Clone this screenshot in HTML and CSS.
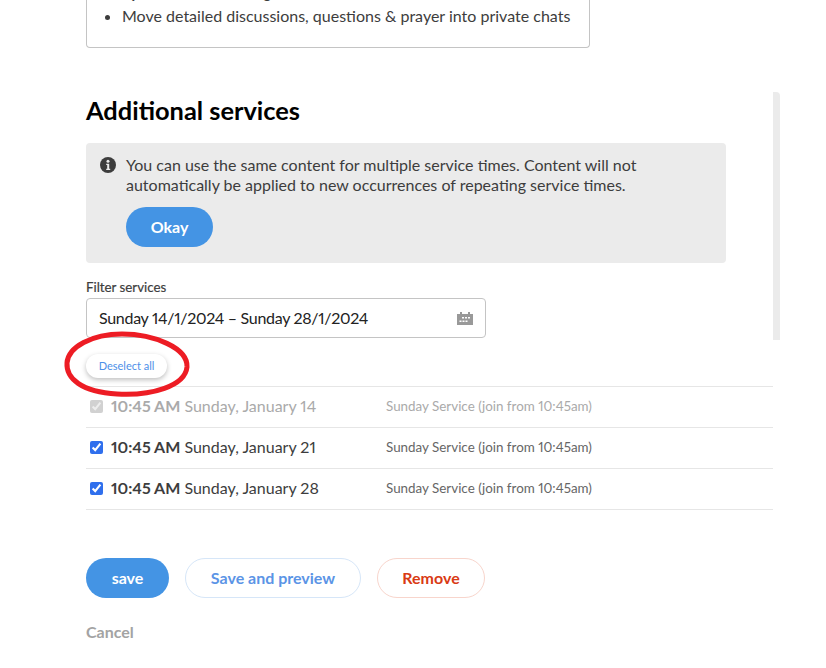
FILE: index.html
```html
<!doctype html>
<html lang="en">
<head>
    <meta charset="UTF-8">
    <title>Additional services</title>
    <link rel="stylesheet" href="styles.css">
</head>
<body>
<div class="page">
    <div class="tips">
        <ul>
            <li>Quieten down during service</li>
            <li>Move detailed discussions, questions &amp; prayer into private chats</li>
        </ul>
    </div>

    <h2 class="title">Additional services</h2>

    <div class="notice">
        <svg class="notice-icon" width="16" height="16" viewBox="0 0 16 16">
            <circle cx="8" cy="8" r="8" fill="#3d3d3d"/>
            <circle cx="8" cy="4.2" r="1.5" fill="#ebebeb"/>
            <path d="M6.200 6.700h3v5h1v1.400H6.200v-1.400h1v-3.600h-1z" fill="#ebebeb"/>
        </svg>
        <div class="notice-body">
            <p>You can use the same content for multiple service times. Content will not automatically be applied to new occurrences of repeating service times.</p>
            <button class="btn btn-primary btn-okay">Okay</button>
        </div>
    </div>

    <label class="filter-label">Filter services</label>
    <div class="filter-input">
        <span>Sunday 14/1/2024 – Sunday 28/1/2024</span>
        <svg width="16" height="13" viewBox="0 0 16 13">
            <path d="M0 2h3V0h2v2h6V0h2v2h3v11H0z" fill="#999"/>
            <path d="M5 5h2v1.500H5zM8 5h2v1.500H8zM11 5h2v1.500h-2zM2.500 8.500h2V10h-2zM5.500 8.500h2V10h-2zM8.500 8.500h2V10h-2z" fill="#fff"/>
        </svg>
    </div>

    <button class="deselect">Deselect all</button>

    <ul class="services">
        <li class="service service-off">
            <input type="checkbox" checked disabled>
            <span class="when"><b>10:45 AM</b> Sunday, January 14</span>
            <span class="name">Sunday Service (join from 10:45am)</span>
        </li>
        <li class="service">
            <input type="checkbox" checked>
            <span class="when"><b>10:45 AM</b> Sunday, January 21</span>
            <span class="name">Sunday Service (join from 10:45am)</span>
        </li>
        <li class="service">
            <input type="checkbox" checked>
            <span class="when"><b>10:45 AM</b> Sunday, January 28</span>
            <span class="name">Sunday Service (join from 10:45am)</span>
        </li>
    </ul>

    <div class="actions">
        <button class="btn btn-primary btn-save">save</button>
        <button class="btn btn-outline btn-preview">Save and preview</button>
        <button class="btn btn-outline btn-remove">Remove</button>
    </div>
    <a class="cancel">Cancel</a>
</div>

<div class="scroll-thumb"></div>

<svg class="circle-mark" width="130" height="70" viewBox="0 0 130 70">
    <path d="M60 4C30 4 6 17 5 33c-1 15 14 29 50 31 35 2 68-8 70-27C126 18 92 4 60 4z" fill="none" stroke="#ed1c24" stroke-width="5"/>
</svg>
</body>
</html>
```

FILE: styles.css
```css
* {
    padding: 0;
    margin: 0;
    box-sizing: border-box;
}

html, body {
    width: 100%;
    height: 100%;
    overflow: hidden;
    background-color: #fff;
}

body {
    font-family: Lato, "Open Sans", sans-serif;
    font-variant-numeric: proportional-nums;
    color: #3d3d3d;
    position: relative;
}

ul {
    list-style: none;
}

button {
    font-family: inherit;
    font-variant-numeric: inherit;
    cursor: pointer;
}

.page {
    width: 687px;
    margin: -30px 0 0 86px;
}

.tips {
    width: 504px;
    height: 78px;
    border: 1px solid #c4c4c4;
    border-top: 0;
    border-radius: 0 0 4px 4px;
    padding: 10px 0 0 35px;
}

.tips ul {
    list-style: disc;
}

.tips li {
    font-size: 16px;
    line-height: 24px;
}

.title {
    margin-top: 47px;
    font-size: 25.4px;
    line-height: 30px;
    font-weight: 700;
    color: #000;
}

.notice {
    display: flex;
    width: 640px;
    height: 120px;
    margin-top: 18px;
    padding: 12px 14px;
    background-color: #ebebeb;
    border-radius: 4px;
}

.notice-icon {
    flex: none;
    margin: 2px 10px 0 0;
}

.notice-body p {
    font-size: 16px;
    line-height: 20px;
}

.btn {
    height: 40px;
    padding-bottom: 2px;
    border-radius: 20px;
    font-size: 16px;
    font-weight: 700;
}

.btn-primary {
    background-color: #4494e4;
    border: 0;
    color: #fff;
}

.btn-okay {
    width: 87px;
    margin-top: 12px;
}

.filter-label {
    display: block;
    margin-top: 16px;
    font-size: 13.3px;
    line-height: 16px;
    -webkit-text-stroke: 0.2px #3d3d3d;
}

.filter-input {
    display: flex;
    align-items: center;
    justify-content: space-between;
    width: 400px;
    height: 40px;
    margin-top: 3px;
    padding: 0 12px;
    border: 1px solid #c4c4c4;
    border-radius: 4px;
    font-size: 16px;
    color: #222;
}

.filter-input span {
    margin-top: -2px;
    letter-spacing: -0.3px;
}

.deselect {
    display: block;
    width: 81px;
    height: 24px;
    margin-top: 16px;
    padding-bottom: 2px;
    background-color: #fff;
    border: 0;
    border-radius: 12px;
    box-shadow: 0 2px 5px rgba(0, 0, 0, 0.25);
    font-size: 11px;
    color: #4d8fe8;
}

.services {
    margin-top: 8px;
    border-top: 1px solid #e6e6e6;
}

.service {
    display: flex;
    align-items: center;
    height: 41px;
    padding-bottom: 3px;
    border-bottom: 1px solid #e6e6e6;
}

.service input {
    width: 13px;
    height: 13px;
    margin: 1px 8px 0 4px;
    accent-color: #2f6fed;
}

.when {
    width: 275px;
    font-size: 16px;
}

.when b {
    font-weight: 700;
}

.name {
    font-size: 13.4px;
    color: #666;
}

.service-off .when,
.service-off .name {
    color: #aaa;
}

.actions {
    display: flex;
    gap: 16px;
    margin-top: 48px;
}

.btn-save {
    width: 83px;
}

.btn-outline {
    background-color: #fff;
}

.btn-preview {
    width: 176px;
    border: 1px solid #d6e6f8;
    color: #5b94e6;
}

.btn-remove {
    width: 108px;
    border: 1px solid #f8d5cc;
    color: #d93a14;
}

.cancel {
    display: block;
    margin-top: 24px;
    font-size: 16px;
    font-weight: 700;
    color: #a3a3a3;
}

.scroll-thumb {
    position: absolute;
    left: 773px;
    top: 92px;
    width: 7px;
    height: 248px;
    background-color: #ebebeb;
    border-radius: 0 4px 0 0;
}

.circle-mark {
    position: absolute;
    left: 62px;
    top: 330px;
}
```
